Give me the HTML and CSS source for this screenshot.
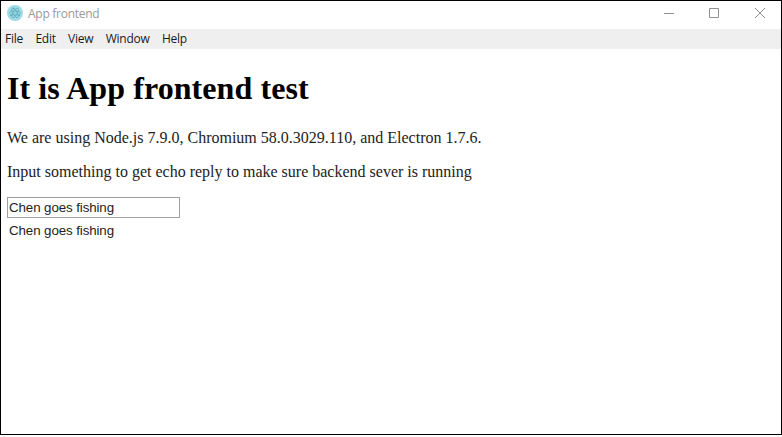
FILE: index.html
```html
<!DOCTYPE html>
<html lang="en">
<head>
<meta charset="utf-8">
<title>App frontend</title>
<link rel="stylesheet" href="styles.css">
</head>
<body>
<div class="window">
  <header class="titlebar">
    <svg class="logo" viewBox="0 0 16 16">
      <circle cx="8" cy="8" r="8" fill="#9edbe4"/>
      <g fill="none" stroke="#4d9fb0" stroke-width=".55">
        <ellipse cx="8" cy="8" rx="5.4" ry="2.1"/>
        <ellipse cx="8" cy="8" rx="5.4" ry="2.1" transform="rotate(60 8 8)"/>
        <ellipse cx="8" cy="8" rx="5.4" ry="2.1" transform="rotate(120 8 8)"/>
      </g>
      <g fill="#4597a9"><circle cx="8" cy="8" r=".5"/><circle cx="3.8" cy="10.5" r=".6"/><circle cx="12.3" cy="10.5" r=".6"/><circle cx="6.5" cy="3.2" r=".6"/></g>
    </svg>
    <span class="title">App frontend</span>
    <div class="controls">
      <svg viewBox="0 0 45 28"><path d="M18 12.5h10"/></svg>
      <svg viewBox="0 0 45 28"><path d="M18.500 7.500h9v9h-9z"/></svg>
      <svg viewBox="0 0 45 28"><path d="M19 7l10 10M29 7l-10 10"/></svg>
    </div>
  </header>
  <nav class="menubar">
    <span>File</span><span>Edit</span><span>View</span><span>Window</span><span>Help</span>
  </nav>
  <main class="content">
    <h1>It is App frontend test</h1>
    <p>We are using Node.js 7.9.0, Chromium 58.0.3029.110, and Electron 1.7.6.</p>
    <p>Input something to get echo reply to make sure backend sever is running</p>
    <input class="field" type="text" value="Chen goes fishing">
    <div class="reply">Chen goes fishing</div>
  </main>
</div>
</body>
</html>
```
FILE: styles.css
```css
* { box-sizing: border-box; }
body { margin: 0; background: #fff; overflow: hidden; }
.window { width: 782px; height: 435px; border: 1px solid #000; background: #fff; }
.titlebar { display: flex; height: 28px; padding-left: 6px; font: 12px/26px "Open Sans", "Noto Sans", sans-serif; letter-spacing: -.27px; color: #999; }
.logo { width: 16px; height: 16px; margin-top: 4px; }
.title { margin-left: 5px; }
.controls { display: flex; margin-left: auto; }
.controls svg { width: 45px; height: 28px; fill: none; stroke: #909090; stroke-width: 1; }
.menubar { display: flex; gap: 12.4px; height: 20px; padding-left: 4px; background: #efefef; font: 12px/20px "Open Sans", "Noto Sans", sans-serif; letter-spacing: -.25px; color: #1a1a1a; }
.content { padding: 21px 6px 0; font: 16px/18px "Liberation Serif", serif; color: #222; }
h1 { margin: 0 0 22px; font-size: 32px; line-height: 37px; letter-spacing: .08px; color: #000; }
p { margin: 0 0 16px; }
.field { display: block; width: 173px; height: 21px; margin: 0; padding: 1px; border: 1px solid #a0a0a0; outline: 0; background: #fff; font: 13.333px "Liberation Sans", sans-serif; letter-spacing: -.1px; color: #222; }
.reply { padding: 5px 2px 0; font: 13.333px/15px "Liberation Sans", sans-serif; letter-spacing: -.1px; }
```
